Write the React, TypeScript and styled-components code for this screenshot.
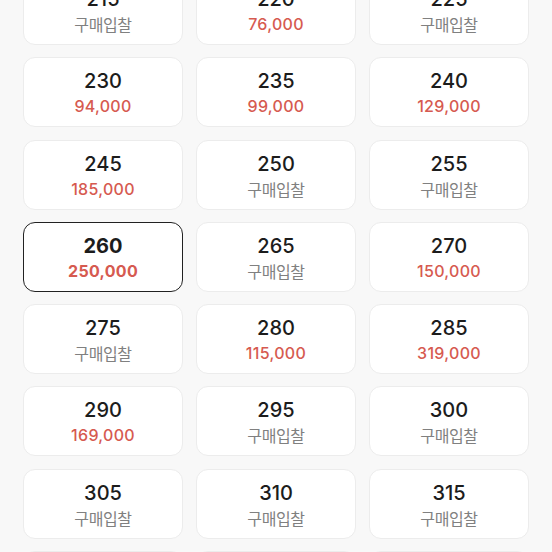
import styled, { createGlobalStyle } from 'styled-components'

const GlobalStyle = createGlobalStyle`
  html, body {
    margin: 0;
    padding: 0;
    background: #f8f8f8;
    overflow: hidden;
  }
  body {
    font-family: Inter, "Noto Sans CJK KR", sans-serif;
  }
`

type SizeOption = {
  size: number
  price?: string
}

const options: SizeOption[] = [
  { size: 215 },
  { size: 220, price: '76,000' },
  { size: 225 },
  { size: 230, price: '94,000' },
  { size: 235, price: '99,000' },
  { size: 240, price: '129,000' },
  { size: 245, price: '185,000' },
  { size: 250 },
  { size: 255 },
  { size: 260, price: '250,000' },
  { size: 265 },
  { size: 270, price: '150,000' },
  { size: 275 },
  { size: 280, price: '115,000' },
  { size: 285, price: '319,000' },
  { size: 290, price: '169,000' },
  { size: 295 },
  { size: 300 },
  { size: 305 },
  { size: 310 },
  { size: 315 },
  { size: 320 },
  { size: 325 },
  { size: 330 },
]

const SELECTED = 260

export default function App() {
  return (
    <>
      <GlobalStyle />
      <SizeGrid>
        {options.map((o) => {
          const selected = o.size === SELECTED
          return (
            <SizeCard key={o.size} $selected={selected}>
              <SizeLabel $selected={selected}>{o.size}</SizeLabel>
              {o.price ? (
                <Price $selected={selected}>{o.price}</Price>
              ) : (
                <BidLabel>구매입찰</BidLabel>
              )}
            </SizeCard>
          )
        })}
      </SizeGrid>
    </>
  )
}

const SizeGrid = styled.div`
  display: grid;
  grid-template-columns: repeat(3, 160px);
  column-gap: 13px;
  row-gap: 12.3px;
  padding: 0 23px;
  margin-top: -25px;
`

const SizeCard = styled.button<{ $selected: boolean }>`
  height: 70px;
  box-sizing: border-box;
  background: #ffffff;
  border: ${(p) => (p.$selected ? '1.5px solid #222222' : '1px solid #ececec')};
  border-radius: 12px;
  padding: 2px 0 0;
  display: flex;
  flex-direction: column;
  align-items: center;
  justify-content: center;
  gap: 2px;
  font-family: inherit;
`

const SizeLabel = styled.div<{ $selected: boolean }>`
  font-size: 20px;
  line-height: 24px;
  font-weight: ${(p) => (p.$selected ? 700 : 500)};
  color: #1c1c1c;
`

const Price = styled.div<{ $selected: boolean }>`
  font-size: 16px;
  line-height: 22px;
  font-weight: ${(p) => (p.$selected ? 700 : 500)};
  color: #d65a50;
  letter-spacing: 0.3px;
`

const BidLabel = styled.div`
  font-family: "Noto Sans CJK KR", sans-serif;
  font-size: 16px;
  line-height: 22px;
  color: #808080;
  letter-spacing: -0.4px;
`
